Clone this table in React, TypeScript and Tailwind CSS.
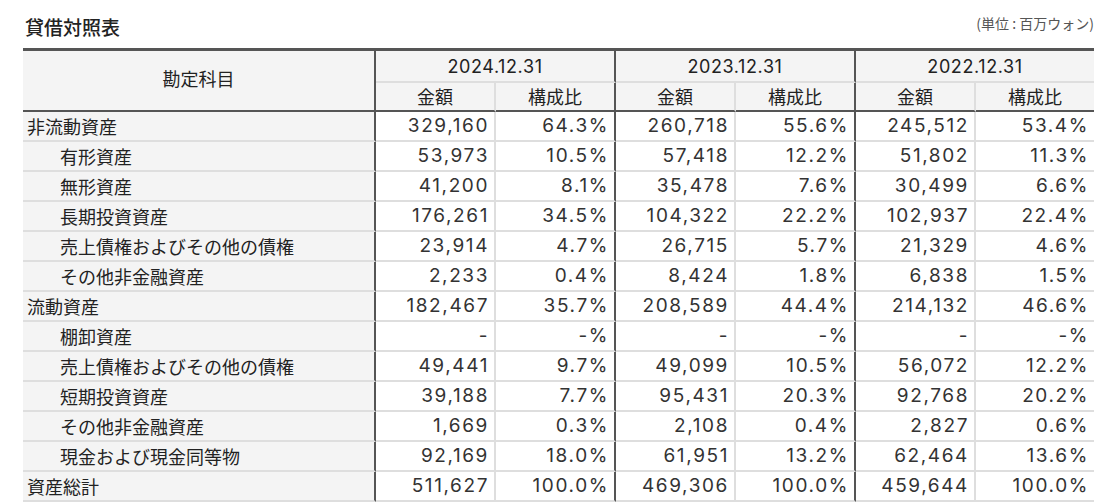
import * as React from "react";

type Row = { label: string; sub: boolean; values: string[] };

const years = ["2024.12.31", "2023.12.31", "2022.12.31"];

const rows: Row[] = [
    { label: "非流動資産", sub: false, values: ["329,160", "64.3%", "260,718", "55.6%", "245,512", "53.4%"] },
    { label: "有形資産", sub: true, values: ["53,973", "10.5%", "57,418", "12.2%", "51,802", "11.3%"] },
    { label: "無形資産", sub: true, values: ["41,200", "8.1%", "35,478", "7.6%", "30,499", "6.6%"] },
    { label: "長期投資資産", sub: true, values: ["176,261", "34.5%", "104,322", "22.2%", "102,937", "22.4%"] },
    { label: "売上債権およびその他の債権", sub: true, values: ["23,914", "4.7%", "26,715", "5.7%", "21,329", "4.6%"] },
    { label: "その他非金融資産", sub: true, values: ["2,233", "0.4%", "8,424", "1.8%", "6,838", "1.5%"] },
    { label: "流動資産", sub: false, values: ["182,467", "35.7%", "208,589", "44.4%", "214,132", "46.6%"] },
    { label: "棚卸資産", sub: true, values: ["-", "-%", "-", "-%", "-", "-%"] },
    { label: "売上債権およびその他の債権", sub: true, values: ["49,441", "9.7%", "49,099", "10.5%", "56,072", "12.2%"] },
    { label: "短期投資資産", sub: true, values: ["39,188", "7.7%", "95,431", "20.3%", "92,768", "20.2%"] },
    { label: "その他非金融資産", sub: true, values: ["1,669", "0.3%", "2,108", "0.4%", "2,827", "0.6%"] },
    { label: "現金および現金同等物", sub: true, values: ["92,169", "18.0%", "61,951", "13.2%", "62,464", "13.6%"] },
    { label: "資産総計", sub: false, values: ["511,627", "100.0%", "469,306", "100.0%", "459,644", "100.0%"] },
];

// right border per value column: light inside a year, dark between years
const colBorder = [
    "border-r-2 border-r-[#dedede]",
    "border-r-2 border-r-[#555555]",
    "border-r-2 border-r-[#dedede]",
    "border-r-2 border-r-[#555555]",
    "border-r-2 border-r-[#dedede]",
    "",
];

export default function App() {
    return (
        <div className="bg-white w-[1117px] h-[502px] overflow-hidden font-['Noto_Sans_CJK_JP',sans-serif] text-[#222]">
            <div className="ml-[23px] w-[1071px]">
                <div className="h-[48px] flex items-center justify-between pt-[4px]">
                    <h1 className="text-[19px] font-medium pl-[2px] leading-none">貸借対照表</h1>
                    <span className="text-[14px] text-[#555] -mt-[6px]">(単位 : 百万ウォン)</span>
                </div>

                <div className="grid grid-cols-[353px_120px_120px_120px_120px_120px_118px] border-t-[3px] border-[#555555]">
                    <div className="row-span-2 bg-[#f4f4f4] border-r-2 border-r-[#555555] border-b-2 border-b-[#555555] flex items-center justify-center text-[18px] pb-[4px]">
                        勘定科目
                    </div>
                    {years.map((y, i) => (
                        <div
                            key={y}
                            className={`col-span-2 h-[32px] bg-[#f4f4f4] border-b-2 border-b-[#dedede] flex items-center justify-center text-[18px] font-['Inter','Noto_Sans_CJK_JP',sans-serif] tracking-[0.6px] ${
                                i < 2 ? "border-r-2 border-r-[#555555]" : ""
                            }`}
                        >
                            {y}
                        </div>
                    ))}
                    {colBorder.map((b, i) => (
                        <div
                            key={i}
                            className={`h-[29px] bg-[#f4f4f4] border-b-2 border-b-[#555555] flex items-center justify-center text-[18px] ${b}`}
                        >
                            {i % 2 === 0 ? "金額" : "構成比"}
                        </div>
                    ))}

                    {rows.map((row, r) => (
                        <React.Fragment key={r}>
                            <div
                                className={`h-[30px] bg-[#f4f4f4] border-b-2 border-b-[#dedede] border-r-2 border-r-[#555555] flex items-center text-[18px] ${
                                    row.sub ? "pl-[37px]" : "pl-[4px]"
                                }`}
                            >
                                {row.label}
                            </div>
                            {row.values.map((v, i) => (
                                <div
                                    key={i}
                                    className={`h-[30px] bg-white border-b-2 border-b-[#dedede] flex items-center justify-end pr-[5px] text-[19px] text-[#333] font-['Inter','Noto_Sans_CJK_JP',sans-serif] tracking-[1.6px] ${colBorder[i]}`}
                                >
                                    {v}
                                </div>
                            ))}
                        </React.Fragment>
                    ))}
                </div>
            </div>
        </div>
    );
}
